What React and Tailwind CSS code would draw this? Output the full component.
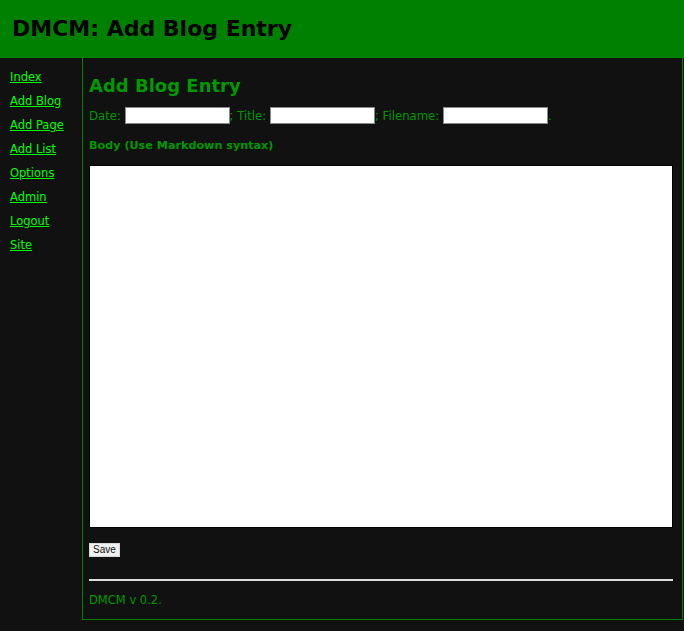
import React from "react";

const links = ["Index", "Add Blog", "Add Page", "Add List", "Options", "Admin", "Logout", "Site"];

export default function App() {
  return (
    <div className="min-h-[631px] bg-[#111111] font-['DejaVu_Sans',sans-serif]">
      {/* Header */}
      <div className="h-[58px] bg-[#008000] flex items-center pl-[12px]">
        <h1 className="text-[22px] font-bold text-black leading-none">DMCM: Add Blog Entry</h1>
      </div>

      <div className="flex">
        {/* Sidebar */}
        <nav className="w-[82px] shrink-0 flex flex-col gap-[8px] pt-[11px] pl-[10px]">
          {links.map((l) => (
            <a key={l} href="#" className="text-[11.5px] leading-[16px] text-[#00ff00] underline">
              {l}
            </a>
          ))}
        </nav>

        {/* Main panel */}
        <main className="flex-1 mr-[1px] mb-[11px] border-x border-b border-[#008000] pl-[6px] pr-[9px] pt-[17px] pb-[11px] text-[#009900]">
          <h2 className="text-[18px] font-bold leading-[21px]">Add Blog Entry</h2>

          <div className="mt-[11px] flex items-center text-[11.7px] leading-[16px]">
            <span>Date:&nbsp;</span>
            <input className="w-[105px] h-[17px] bg-white border border-[#8a8a8a]" />
            <span>;&nbsp;Title:&nbsp;</span>
            <input className="w-[105px] h-[17px] bg-white border border-[#8a8a8a]" />
            <span>;&nbsp;Filename:&nbsp;</span>
            <input className="w-[105px] h-[17px] bg-white border border-[#8a8a8a]" />
            <span>.</span>
          </div>

          <p className="mt-[15px] text-[11.2px] font-bold leading-[14px]">Body (Use Markdown syntax)</p>

          <textarea className="mt-[12px] block w-full h-[363px] bg-white border border-black resize-none" />

          <button className="mt-[15px] block h-[14px] px-[3px] bg-[#f0f0f0] border border-[#d8d8d8] text-[10px] leading-[12px] text-[#111] font-['Liberation_Sans',sans-serif]">
            Save
          </button>

          <hr className="mt-[22px] border-0 h-[2px] bg-[#dddddd]" />

          <p className="mt-[11px] text-[11.5px] leading-[16px]">DMCM v 0.2.</p>
        </main>
      </div>
    </div>
  );
}
